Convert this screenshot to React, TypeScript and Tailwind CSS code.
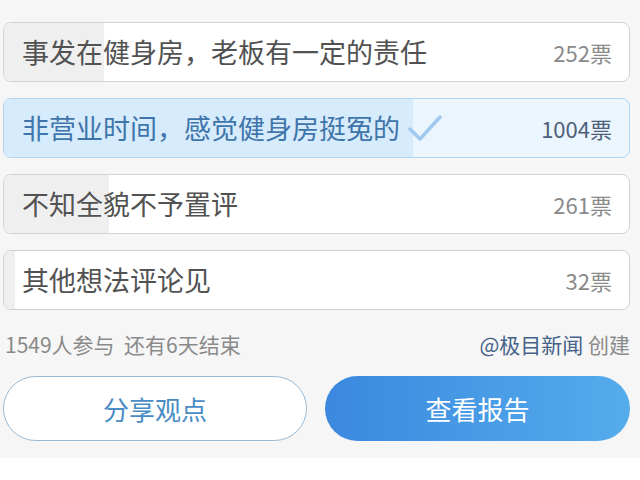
const OPTIONS = [
  { label: "事发在健身房，老板有一定的责任", votes: 252, pct: 100, selected: false },
  { label: "非营业时间，感觉健身房挺冤的", votes: 1004, pct: 409, selected: true },
  { label: "不知全貌不予置评", votes: 261, pct: 105, selected: false },
  { label: "其他想法评论见", votes: 32, pct: 11, selected: false },
];

const FONT = { fontFamily: '"Noto Sans CJK SC", "Noto Sans", sans-serif' };

function Check() {
  return (
    <svg width="34" height="28" viewBox="0 0 34 28" className="ml-2">
      <path d="M2 15 L12 25 L32 3" fill="none" stroke="#9fc9ee" strokeWidth="3.5" strokeLinecap="round" strokeLinejoin="round" />
    </svg>
  );
}

function Option({ label, votes, pct, selected }: (typeof OPTIONS)[number]) {
  return (
    <div
      className={
        selected
          ? "relative h-[60px] overflow-hidden rounded-lg border border-[#b3d4ee] bg-[#eaf5fe]"
          : "relative h-[60px] overflow-hidden rounded-lg border border-[#d2d2d2] bg-white"
      }
    >
      <div
        className={selected ? "absolute inset-y-0 left-0 bg-[#d6ebfc]" : "absolute inset-y-0 left-0 bg-[#efefef]"}
        style={{ width: pct }}
      />
      <div className="relative flex h-full items-center justify-between pl-[18px] pr-[17px]">
        <div className="flex items-center">
          <span className={selected ? "text-[27px] text-[#3f75aa]" : "text-[27px] text-[#525252]"}>{label}</span>
          {selected && <Check />}
        </div>
        <span className={selected ? "text-[22px] text-[#4e6078]" : "text-[22px] text-[#8a8a8a]"}>
          {votes}票
        </span>
      </div>
    </div>
  );
}

export default function App() {
  return (
    <div className="h-[480px] w-[640px] bg-white" style={FONT}>
      <div className="flex flex-col bg-[#f6f6f6] pb-[17px] pl-[3px] pr-[10px] pt-[22px]">
        <div className="flex flex-col gap-4">
          {OPTIONS.map((o) => (
            <Option key={o.label} {...o} />
          ))}
        </div>
        <div className="mt-[19px] flex items-center justify-between text-[21px] leading-[30px] text-[#8a8a8a]">
          <span className="pl-[2px]">1549人参与&nbsp;&nbsp;还有6天结束</span>
          <span>
            <span className="text-[#45628a]">@极目新闻</span> 创建
          </span>
        </div>
        <div className="mt-[17px] flex gap-[18px]">
          <button className="h-[65px] w-[304px] rounded-full border border-[#98b9d3] bg-white text-[26px] text-[#4a8cc4]">
            分享观点
          </button>
          <button className="h-[65px] flex-1 rounded-full bg-gradient-to-r from-[#3b88df] to-[#55aceb] text-[26px] text-white">
            查看报告
          </button>
        </div>
      </div>
    </div>
  );
}
